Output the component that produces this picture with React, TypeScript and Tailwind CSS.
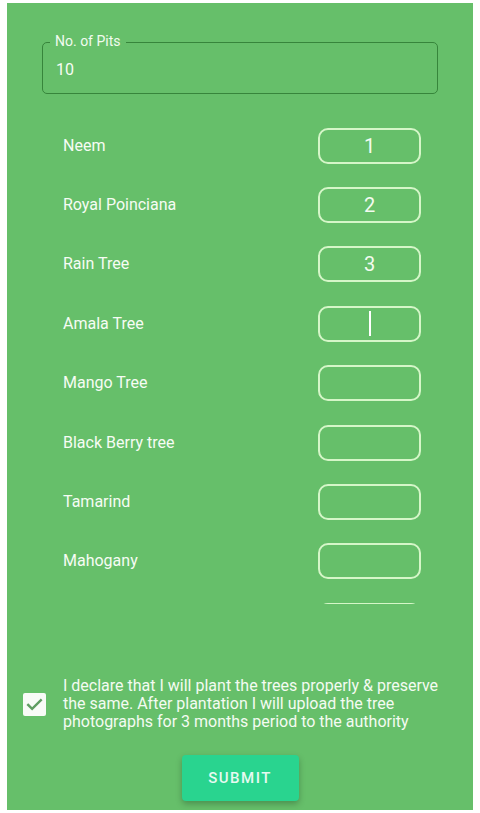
import { useState } from "react"

const trees = [
  { name: "Neem", count: "1" },
  { name: "Royal Poinciana", count: "2" },
  { name: "Rain Tree", count: "3" },
  { name: "Amala Tree", count: "", focused: true },
  { name: "Mango Tree", count: "" },
  { name: "Black Berry tree", count: "" },
  { name: "Tamarind", count: "" },
  { name: "Mahogany", count: "" },
  // next row only peeks in under the scroll edge
  { name: "", count: "" },
]

export default function App() {
  const [agreed, setAgreed] = useState(true)

  return (
    <div className="w-[480px] h-[813px] bg-white pt-[3px] pl-[7px] font-['Roboto',sans-serif]">
      <div className="w-[466px] h-[807px] bg-[#66bf6a] flex flex-col">
        {/* pits field */}
        <div className="relative mx-[35px] mt-[39px] h-[52px] border-[1.5px] border-[#37853b] rounded-[5px] flex items-center px-[13px] pt-[3px]">
          <span className="absolute left-[7px] -top-[10px] px-[5px] bg-[#66bf6a] text-[14px] leading-[17px] text-[#f1fbef]">
            No. of Pits
          </span>
          <span className="text-[16px] text-[#f6fcf4]">10</span>
        </div>

        {/* species list */}
        <div className="mt-[22px] h-[488px] overflow-hidden">
          {trees.map((t, i) => (
            <div key={i} className="h-[59.4px] flex items-center justify-between pl-[56px] pr-[52px]">
              <span className="text-[16px] text-[#f6fcf4]">{t.name}</span>
              <div className="w-[103px] h-[36px] border-2 border-[#d5f6c8] rounded-[10px] flex items-center justify-center text-[20px] text-[#f3fbf0]">
                {t.focused ? <span className="w-[2px] h-[25px] bg-white" /> : t.count}
              </div>
            </div>
          ))}
        </div>

        {/* declaration */}
        <div className="mt-[73px] flex items-center pl-[16px]">
          <button
            onClick={() => setAgreed(!agreed)}
            className="w-[23px] h-[23px] shrink-0 rounded-[2px] bg-[#f8fbf7] flex items-center justify-center"
          >
            {agreed && (
              <svg width="19" height="19" viewBox="0 0 24 24" fill="none">
                <path d="M4 12.5l5 5L20 6.5" stroke="#5f9d62" strokeWidth="3" strokeLinecap="square" />
              </svg>
            )}
          </button>
          <p className="ml-[17px] text-[16px] leading-[18px] text-[#f4fbf2] whitespace-nowrap">
            I declare that I will plant the trees properly &amp; preserve
            <br />
            the same. After plantation I will upload the tree
            <br />
            photographs for 3 months period to the authority
          </p>
        </div>

        <div className="mt-[24px] flex justify-center">
          <button className="w-[117px] h-[46px] rounded-[4px] bg-[#29d48f] shadow-[0_3px_6px_rgba(0,0,0,0.25)] text-[15px] font-medium tracking-[1.5px] text-[#e6faf1]">
            SUBMIT
          </button>
        </div>
      </div>
    </div>
  )
}
